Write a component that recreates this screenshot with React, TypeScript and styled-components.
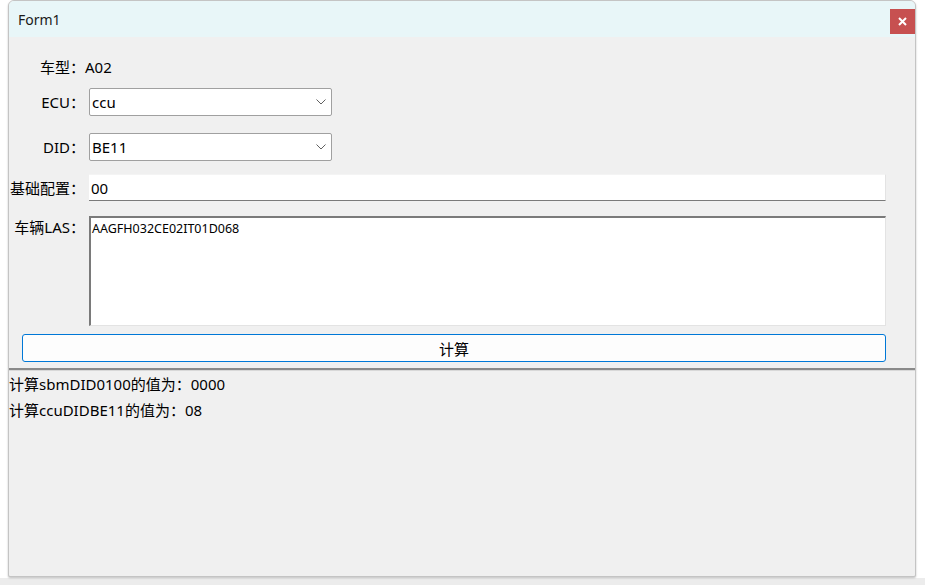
import React from 'react';
import styled, { createGlobalStyle } from 'styled-components';

const GlobalStyle = createGlobalStyle`
  html, body {
    margin: 0;
    padding: 0;
    background: #fbfbfb;
  }
  body {
    font-family: "Noto Sans", "Noto Sans CJK SC", sans-serif;
    overflow: hidden;
  }
`;

const Desktop = styled.div`
  width: 925px;
  height: 585px;
  padding-left: 8px;
  box-sizing: border-box;
  background: linear-gradient(to bottom, #ffffff 0, #ffffff 578px, #ececec 578px);
`;

const Window = styled.div`
  width: 908px;
  height: 577px;
  box-sizing: border-box;
  display: flex;
  flex-direction: column;
  border: 1px solid #c4c4c4;
  border-radius: 6px 6px 2px 2px;
  background: #f0f0f0;
  overflow: hidden;
  box-shadow: 0 1px 2px rgba(0, 0, 0, 0.25);
`;

const TitleBar = styled.div`
  height: 36px;
  flex-shrink: 0;
  display: flex;
  align-items: center;
  justify-content: space-between;
  background: #e8f6f8;
  padding-left: 9px;
`;

const Title = styled.span`
  font-family: "Noto Sans", "Open Sans", sans-serif;
  font-size: 14px;
  color: #1a1a1a;
`;

const CloseButton = styled.div`
  width: 25px;
  height: 25px;
  margin-top: 5px;
  display: flex;
  align-items: center;
  justify-content: center;
  background: #c75050;
`;

const Form = styled.div`
  display: flex;
  flex-direction: column;
  padding: 20px 29px 0 0;
`;

const Row = styled.div<{ $top?: number; $alignTop?: boolean }>`
  display: flex;
  align-items: ${({ $alignTop }) => ($alignTop ? 'flex-start' : 'center')};
  margin-top: ${({ $top }) => $top ?? 0}px;
`;

const Label = styled.div<{ $offset?: number }>`
  width: 76px;
  flex-shrink: 0;
  text-align: right;
  white-space: nowrap;
  font-size: 15px;
  line-height: 20px;
  color: #000;
  margin-top: ${({ $offset }) => $offset ?? 0}px;
`;

const Value = styled.div`
  font-size: 15px;
  line-height: 20px;
  color: #000;
`;

const Combo = styled.div`
  width: 243px;
  height: 28px;
  margin-left: 4px;
  box-sizing: border-box;
  display: flex;
  align-items: center;
  justify-content: space-between;
  padding: 0 5px 0 2px;
  background: #fff;
  border: 1px solid #a0a0a0;
  border-radius: 2px;
  font-size: 15px;
  color: #000;
`;

const TextField = styled.input`
  flex: 1;
  height: 27px;
  margin: 0 0 0 4px;
  box-sizing: border-box;
  padding: 0 2px;
  background: #fff;
  border: none;
  border-top: 1px solid #f4f4f4;
  border-right: 1px solid #e3e3e3;
  border-bottom: 1px solid #7a7a7a;
  outline: none;
  font-family: "Noto Sans", "Noto Sans CJK SC", sans-serif;
  font-size: 15px;
  color: #000;
`;

const TextArea = styled.textarea`
  flex: 1;
  height: 110px;
  margin: 0 0 0 4px;
  box-sizing: border-box;
  padding: 3px 1px;
  background: #fff;
  border-style: solid;
  border-width: 2px 1px 1px 2px;
  border-color: #7a7a7a #e3e3e3 #e3e3e3 #7a7a7a;
  resize: none;
  outline: none;
  font-family: "Noto Sans", "Noto Sans CJK SC", sans-serif;
  font-size: 12.5px;
  line-height: 16px;
  color: #000;
`;

const CalcButton = styled.div`
  height: 28px;
  margin: 8px 0 0 13px;
  box-sizing: border-box;
  display: flex;
  align-items: center;
  justify-content: center;
  background: #fdfdfd;
  border: 1px solid #0078d7;
  border-radius: 3px;
  font-size: 15px;
  color: #000;
`;

const Separator = styled.div`
  height: 2px;
  margin-top: 6px;
  background: #8a8a8a;
  border-bottom: 1px solid #d8d8d8;
`;

const Results = styled.div`
  display: flex;
  flex-direction: column;
`;

const ResultLine = styled.div`
  font-size: 15px;
  line-height: 26px;
  color: #000;
  white-space: nowrap;
`;

const Chevron = () => (
  <svg width="10" height="6" viewBox="0 0 10 6">
    <path d="M0.5 0.5 L5 5 L9.5 0.5" fill="none" stroke="#606060" strokeWidth="1" />
  </svg>
);

const CloseIcon = () => (
  <svg width="9" height="9" viewBox="0 0 9 9">
    <path d="M1 1 L8 8 M8 1 L1 8" stroke="#fff" strokeWidth="2" />
  </svg>
);

export default function App() {
  return (
    <Desktop>
      <GlobalStyle />
      <Window>
        <TitleBar>
          <Title>Form1</Title>
          <CloseButton>
            <CloseIcon />
          </CloseButton>
        </TitleBar>
        <Form>
          <Row>
            <Label>车型：</Label>
            <Value>A02</Value>
          </Row>
          <Row $top={11}>
            <Label>ECU：</Label>
            <Combo>
              <span>ccu</span>
              <Chevron />
            </Combo>
          </Row>
          <Row $top={17}>
            <Label>DID：</Label>
            <Combo>
              <span>BE11</span>
              <Chevron />
            </Combo>
          </Row>
          <Row $top={13}>
            <Label>基础配置：</Label>
            <TextField defaultValue="00" readOnly />
          </Row>
          <Row $top={15} $alignTop>
            <Label $offset={1}>车辆LAS：</Label>
            <TextArea defaultValue="AAGFH032CE02IT01D068" readOnly />
          </Row>
          <CalcButton>计算</CalcButton>
        </Form>
        <Separator />
        <Results>
          <ResultLine>计算sbmDID0100的值为：0000</ResultLine>
          <ResultLine>计算ccuDIDBE11的值为：08</ResultLine>
        </Results>
      </Window>
    </Desktop>
  );
}
